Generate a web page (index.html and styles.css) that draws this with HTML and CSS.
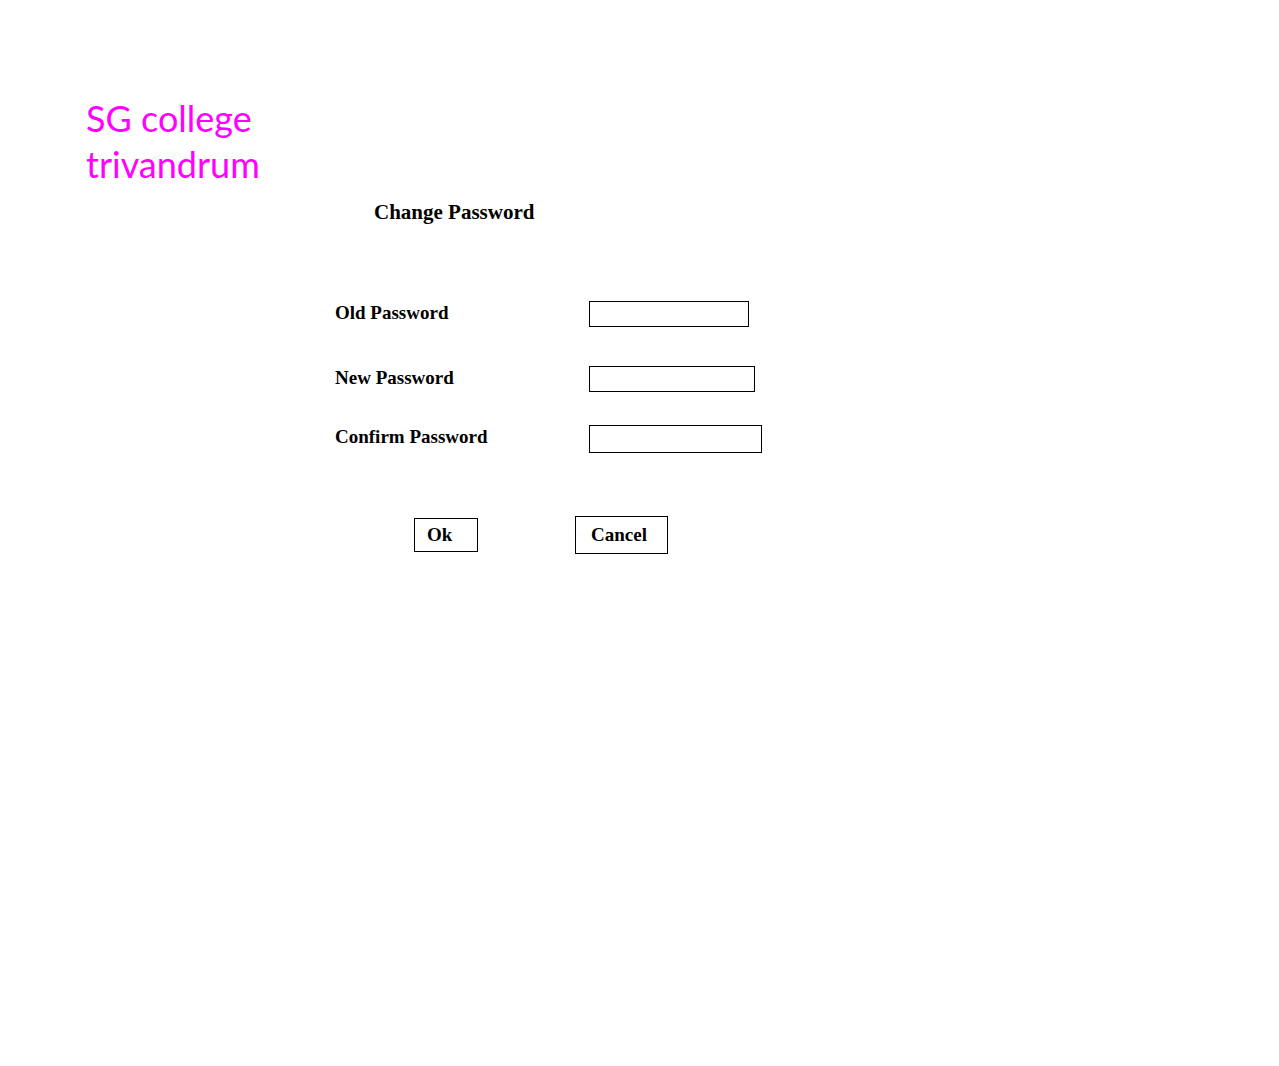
FILE: index.html
```html
<!DOCTYPE html>
<html lang="en">
<head>
<meta charset="utf-8">
<meta name="viewport" content="width=device-width, initial-scale=1">
<title>Change Password</title>
<link rel="stylesheet" href="styles.css">
</head>
<body>
<header class="brand">SG college<br>trivandrum</header>
<main class="content">
  <h1 class="title">Change Password</h1>
  <form class="form">
    <div class="fields">
      <label for="old">Old Password</label>
      <input class="field field-small" type="password" id="old">
      <label for="new">New Password</label>
      <input class="field field-medium" type="password" id="new">
      <label for="confirm">Confirm Password</label>
      <input class="field field-large" type="password" id="confirm">
    </div>
    <div class="actions">
      <button class="button button-ok" type="submit">Ok</button>
      <button class="button button-cancel" type="button">Cancel</button>
    </div>
  </form>
</main>
</body>
</html>
```
FILE: styles.css
```css
* {
  box-sizing: border-box;
}

body {
  margin: 0;
  background: #fff;
  color: #000;
  font: bold 19px/24px "Liberation Serif", "Times New Roman", serif;
}

.brand {
  padding: 95px 0 0 86px;
  color: #f0f;
  font: 36px/46px "Tempus Sans ITC", Lato, sans-serif;
}

.content {
  padding: 13px 24px 24px 335px;
}

.title {
  margin: 0 0 77px;
  padding-left: 39px;
  font-size: 21px;
  line-height: 24px;
}

.fields {
  display: grid;
  grid-template-columns: 254px minmax(0, 1fr);
  grid-template-rows: 65px 59px 28px;
  align-items: start;
}

.field {
  height: 26px;
  max-width: 100%;
  padding: 0 6px;
  border: 1px solid #000;
  border-radius: 0;
  background: #fff;
  font: inherit;
}

.field-small {
  width: 160px;
}

.field-medium {
  width: 166px;
}

.field-large {
  width: 173px;
  height: 28px;
}

.actions {
  display: flex;
  align-items: center;
  gap: 97px;
  padding: 63px 0 0 79px;
}

.button {
  border: 1px solid #000;
  border-radius: 0;
  background: #fff;
  color: inherit;
  font: inherit;
  text-align: left;
}

.button-ok {
  width: 64px;
  height: 34px;
  padding: 0 12px;
}

.button-cancel {
  width: 93px;
  height: 38px;
  padding: 0 15px;
}
```
